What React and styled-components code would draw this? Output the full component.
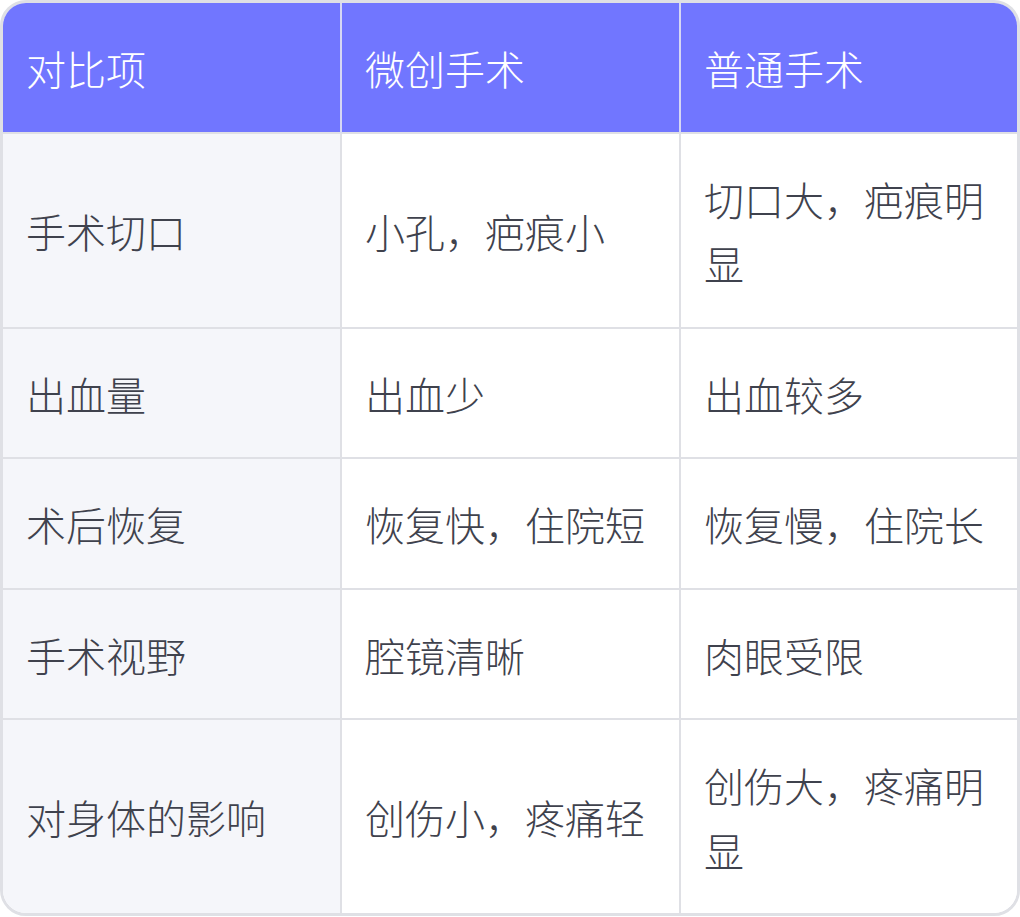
import styled, {createGlobalStyle} from 'styled-components'

const GlobalStyle = createGlobalStyle`
  html, body {
    margin: 0;
    padding: 0;
    background: #ffffff;
  }

  body {
    font-family: "Noto Sans CJK SC", "Noto Sans", sans-serif;
  }
`

const Table = styled.div`
  box-sizing: border-box;
  width: 1020px;
  display: grid;
  grid-template-columns: 339px 339px 1fr;
  border: 3px solid #dfe0e5;
  border-radius: 26px;
  overflow: hidden;
  background: #ffffff;
`

const Cell = styled.div`
  box-sizing: border-box;
  display: flex;
  align-items: center;
  padding: 33px 22px 31px 23px;
  font-size: 40px;
  font-weight: 300;
  line-height: 64.5px;
  color: ${(p) => (p.$head ? '#ffffff' : '#3f424d')};
  background: ${(p) => (p.$head ? '#7176ff' : p.$first ? '#f5f6fa' : '#ffffff')};
  border-right: ${(p) => (p.$last ? 'none' : `2px solid ${p.$head ? '#d6d7f4' : '#dfe0e5'}`)};
  border-bottom: ${(p) => (p.$bottom ? 'none' : '2px solid #dfe0e5')};
  word-break: break-all;
`

const head = ['对比项', '微创手术', '普通手术']

const rows = [
  ['手术切口', '小孔，疤痕小', '切口大，疤痕明显'],
  ['出血量', '出血少', '出血较多'],
  ['术后恢复', '恢复快，住院短', '恢复慢，住院长'],
  ['手术视野', '腔镜清晰', '肉眼受限'],
  ['对身体的影响', '创伤小，疼痛轻', '创伤大，疼痛明显'],
]

export default function App() {
  return (
    <>
      <GlobalStyle />
      <Table>
        {head.map((text, i) => (
          <Cell key={text} $head $last={i === 2}>
            {text}
          </Cell>
        ))}
        {rows.map((row, r) =>
          row.map((text, i) => (
            <Cell
              key={`${r}-${i}`}
              $first={i === 0}
              $last={i === 2}
              $bottom={r === rows.length - 1}>
              {text}
            </Cell>
          )),
        )}
      </Table>
    </>
  )
}
